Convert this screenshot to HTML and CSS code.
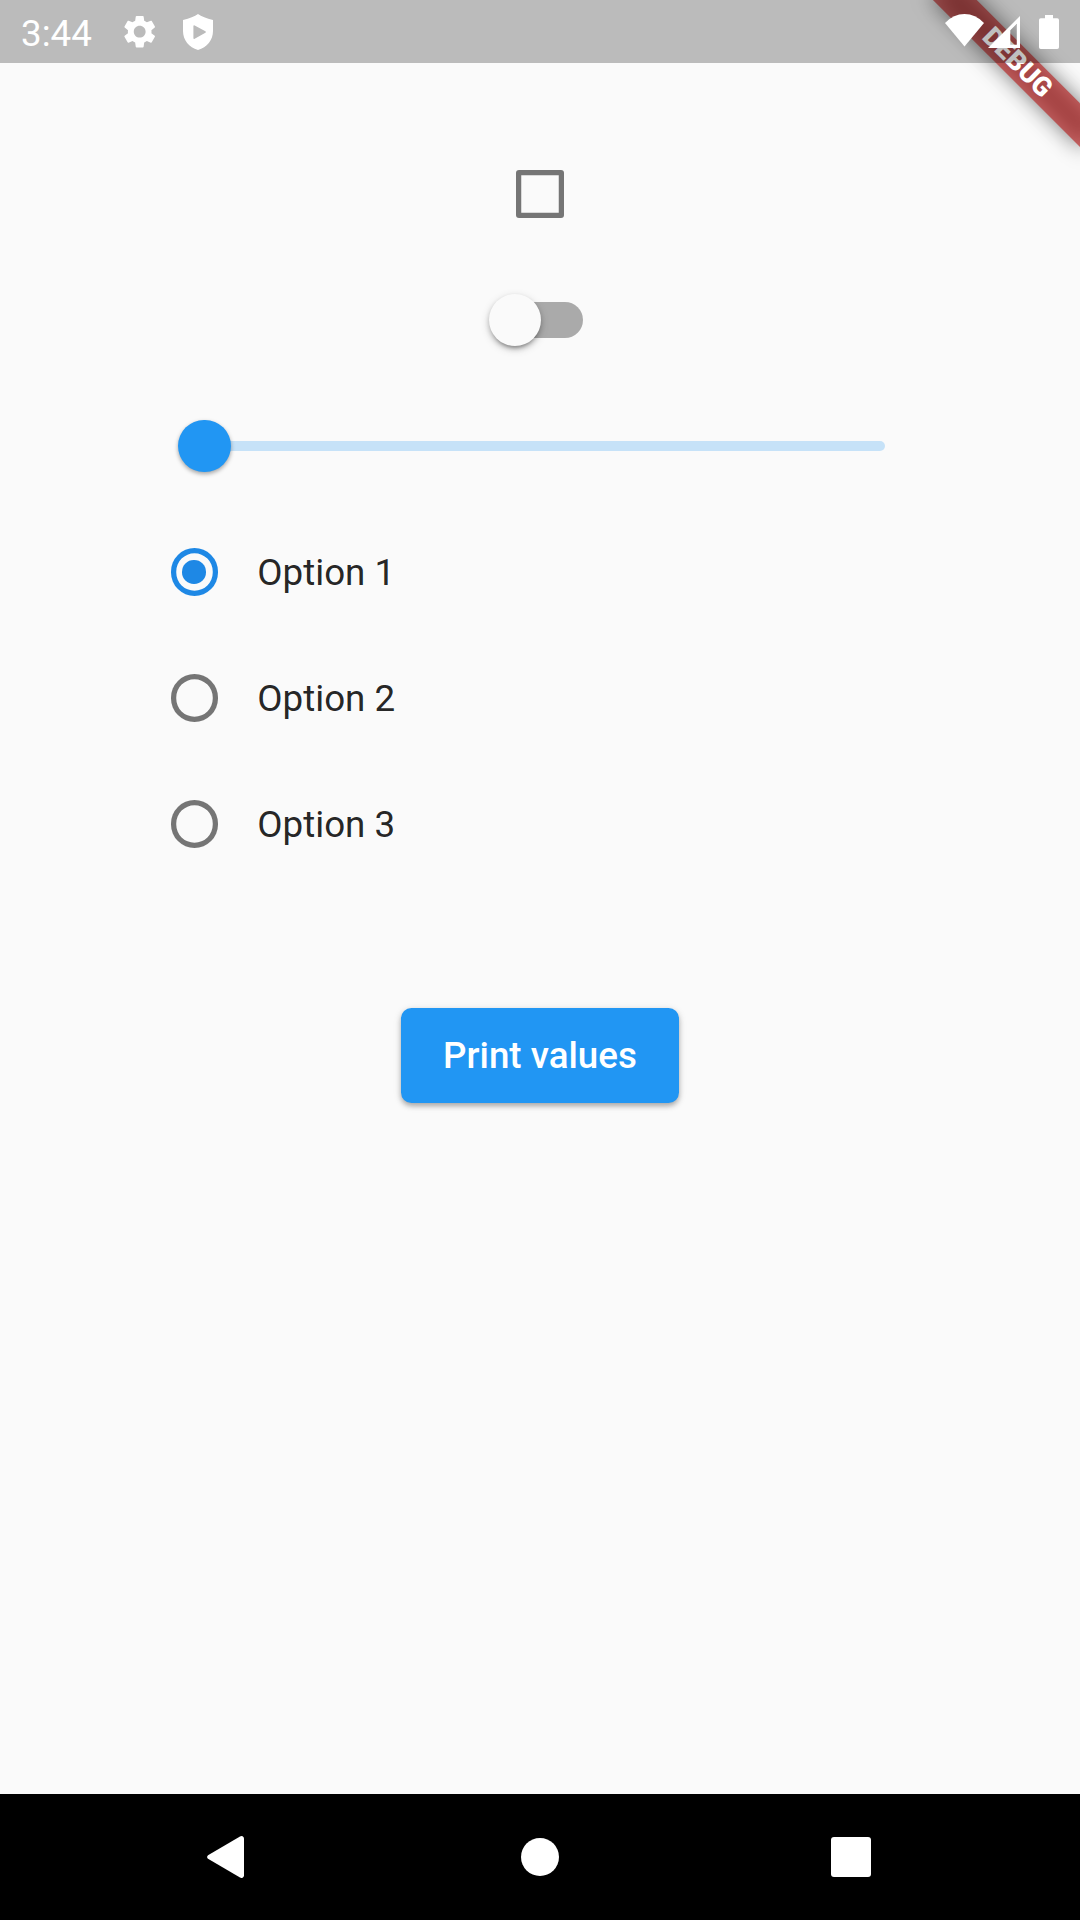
FILE: index.html
```html
<!DOCTYPE html>
<html lang="en">
<head>
<meta charset="utf-8">
<title>Print values</title>
<link rel="stylesheet" href="styles.css">
</head>
<body>
<div class="screen">
  <header class="status-bar">
    <span class="clock">3:44</span>
    <svg class="icon-settings" viewBox="0 0 24 24"><path d="M19.14 12.94c.04-.3.06-.61.06-.94 0-.32-.02-.64-.07-.94l2.03-1.58c.18-.14.23-.41.12-.61l-1.92-3.32c-.12-.22-.37-.29-.59-.22l-2.39.96c-.5-.38-1.03-.7-1.62-.94l-.36-2.54c-.04-.24-.24-.41-.48-.41h-3.84c-.24 0-.43.17-.47.41l-.36 2.54c-.59.24-1.13.57-1.62.94l-2.39-.96c-.22-.08-.47 0-.59.22L2.74 8.87c-.12.21-.08.47.12.61l2.03 1.58c-.05.3-.09.63-.09.94s.02.64.07.94l-2.03 1.58c-.18.14-.23.41-.12.61l1.92 3.32c.12.22.37.29.59.22l2.39-.96c.5.38 1.03.7 1.62.94l.36 2.54c.05.24.24.41.48.41h3.84c.24 0 .44-.17.47-.41l.36-2.54c.59-.24 1.13-.56 1.62-.94l2.39.96c.22.08.47 0 .59-.22l1.92-3.32c.12-.22.07-.47-.12-.61l-2.01-1.58zM12 15.6c-1.98 0-3.6-1.62-3.6-3.6s1.62-3.6 3.6-3.6 3.6 1.62 3.6 3.6-1.62 3.6-3.6 3.6z"/></svg>
    <svg class="icon-shield" viewBox="0 0 30 36"><path fill-rule="evenodd" d="M15 0Q20 3.6 30 6V17C30 26 24 33.5 15 36C6 33.5 0 26 0 17V6Q10 3.6 15 0ZM10.4 12.2V24Q10.4 25.4 11.7 24.8L22.4 18.8Q23.6 18 22.4 17.2L11.7 11.4Q10.4 10.8 10.4 12.2Z"/></svg>
    <div class="system-icons">
      <svg class="icon-wifi" viewBox="0 0 39 33"><path d="M19.5 32.6L0 8.9Q8.6 0 19.5 0T39 8.9Z"/></svg>
      <svg class="icon-signal" viewBox="0 0 32 32"><path fill-rule="evenodd" d="M32 0V32H0ZM22.3 14.2V28.8H28.8V7.8Z"/></svg>
      <svg class="icon-battery" viewBox="0 0 20 34"><path d="M6 0H14V3.3H18.2Q20 3.3 20 5.1V32.2Q20 34 18.2 34H1.8Q0 34 0 32.2V5.1Q0 3.3 1.8 3.3H6Z"/></svg>
    </div>
  </header>

  <main class="form">
    <div class="row centered"><span class="checkbox"></span></div>
    <div class="row centered"><span class="switch"><span class="switch-thumb"></span></span></div>
    <div class="row slider"><span class="slider-thumb"></span><span class="slider-track"></span></div>
    <div class="row option"><span class="radio selected"></span><span class="label">Option 1</span></div>
    <div class="row option"><span class="radio"></span><span class="label">Option 2</span></div>
    <div class="row option"><span class="radio"></span><span class="label">Option 3</span></div>
    <button class="print-button" type="button">Print values</button>
  </main>

  <nav class="nav-bar">
    <svg class="nav-back" viewBox="0 0 37 42"><path d="M1 19.2L33 .4Q34.2 -.2 35.6 .3Q37 1 37 2.5V39.5Q37 41 35.6 41.7Q34.2 42.2 33 41.6L1 22.8Q-.8 21 1 19.2Z"/></svg>
    <span class="nav-home"></span>
    <span class="nav-recents"></span>
  </nav>

  <div class="debug-banner"><span class="debug-text">DEBUG</span></div>
</div>
</body>
</html>
```
FILE: styles.css
```css
body {
  margin: 0;
  background: #fafafa;
  font-family: Roboto, sans-serif;
}

.screen {
  position: relative;
  display: flex;
  flex-direction: column;
  width: 1080px;
  height: 1920px;
  overflow: hidden;
}

.status-bar {
  position: relative;
  z-index: 2;
  box-sizing: border-box;
  flex: none;
  display: flex;
  align-items: center;
  height: 63px;
  padding: 0 21px;
  background: rgba(0, 0, 0, 0.25);
  color: #fff;
  fill: #fff;
}

.clock {
  width: 99px;
  padding-top: 4px;
  font-size: 36.75px;
  line-height: 42px;
}

.icon-settings {
  width: 39.4px;
  height: 39.4px;
}

.icon-shield {
  width: 30px;
  height: 36px;
  margin-left: 23.6px;
}

.system-icons {
  display: flex;
  align-items: center;
  margin-left: auto;
}

.icon-wifi {
  width: 39px;
  height: 33px;
  margin-bottom: 2px;
}

.icon-signal {
  width: 32px;
  height: 32px;
  margin-left: 4px;
}

.icon-battery {
  width: 20px;
  height: 34px;
  margin-left: 19px;
}

.form {
  flex: 1;
  display: flex;
  flex-direction: column;
  padding: 68px 131.25px 0;
}

.row {
  display: flex;
  align-items: center;
  height: 126px;
}

.centered {
  justify-content: center;
}

.checkbox {
  width: 47.25px;
  height: 47.25px;
  border-radius: 3px;
  box-shadow: inset 0 0 0 5.25px #757575;
}

.switch {
  display: flex;
  align-items: center;
  width: 86.6px;
  height: 36.75px;
  border-radius: 19px;
  background: #aaa;
}

.switch-thumb {
  width: 52.5px;
  height: 52.5px;
  margin-left: -7.9px;
  border-radius: 50%;
  background: #fafafa;
  box-shadow: 0 5px 3px -3px rgba(0, 0, 0, 0.2), 0 3px 5px rgba(0, 0, 0, 0.2), 0 3px 10px rgba(0, 0, 0, 0.16);
}

.slider {
  padding: 0 63.8px 0 46.8px;
}

.slider-thumb {
  z-index: 1;
  flex: none;
  width: 52.5px;
  height: 52.5px;
  border-radius: 50%;
  background: #2196f3;
  box-shadow: 0 2px 4px rgba(0, 0, 0, 0.35);
}

.slider-track {
  flex: 1;
  height: 10.5px;
  margin-left: -10px;
  border-radius: 0 5.25px 5.25px 0;
  background: #c6e2f8;
}

.option {
  gap: 39.4px;
  padding-left: 39.4px;
}

.radio {
  display: flex;
  align-items: center;
  justify-content: center;
  width: 47.25px;
  height: 47.25px;
  border-radius: 50%;
  box-shadow: inset 0 0 0 5.25px #757575;
}

.selected {
  box-shadow: inset 0 0 0 5.25px #1e88e5;
}

.selected::after {
  content: "";
  width: 23.6px;
  height: 23.6px;
  border-radius: 50%;
  background: #1e88e5;
}

.label {
  color: rgba(0, 0, 0, 0.87);
  font-size: 36.75px;
}

.print-button {
  align-self: center;
  width: 278px;
  height: 94.5px;
  margin-top: 121px;
  padding: 0;
  border: 0;
  border-radius: 10.5px;
  background: #2196f3;
  color: #fff;
  font: 500 36.75px/43px Roboto, sans-serif;
  box-shadow: 0 3px 5px rgba(0, 0, 0, 0.26), 0 2px 9px rgba(0, 0, 0, 0.12);
}

.nav-bar {
  flex: none;
  display: flex;
  align-items: center;
  height: 126px;
  padding-left: 207px;
  background: #000;
  fill: #fff;
}

.nav-back {
  width: 37px;
  height: 42px;
}

.nav-home {
  width: 38px;
  height: 38px;
  margin-left: 277px;
  border-radius: 50%;
  background: #fff;
}

.nav-recents {
  width: 40px;
  height: 40px;
  margin-left: 272px;
  border-radius: 3px;
  background: #fff;
}

/* Corner ribbon: lies across the top right corner, under the status bar tint */
.debug-banner {
  position: absolute;
  z-index: 1;
  top: 73px;
  right: -105px;
  display: flex;
  align-items: center;
  justify-content: center;
  width: 210px;
  height: 31px;
  transform: rotate(45deg);
  transform-origin: 50% -73px;
}

.debug-banner::before,
.debug-banner::after {
  content: "";
  position: absolute;
  inset: 0;
}

.debug-banner::before {
  background: rgba(0, 0, 0, 0.5);
  filter: blur(10.4px);
}

.debug-banner::after {
  background: rgba(183, 28, 28, 0.63);
}

.debug-text {
  position: relative;
  z-index: 1;
  color: #fff;
  font-size: 26.8px;
  font-weight: 900;
  line-height: 31px;
}
```
